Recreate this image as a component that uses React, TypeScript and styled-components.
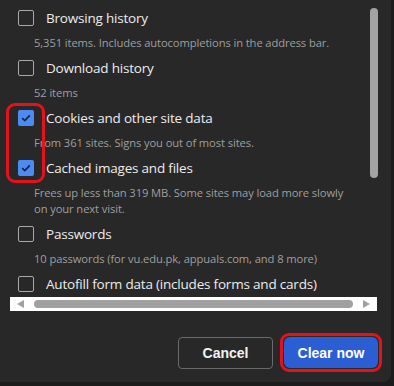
import React from "react";
import styled, { createGlobalStyle } from "styled-components";

const GlobalStyle = createGlobalStyle`
  html, body {
    margin: 0;
    padding: 0;
    background: #1c1c1c;
  }
  body {
    font-family: "Open Sans", "Noto Sans", sans-serif;
  }
`;

interface Item {
  label: string;
  desc: string;
  checked: boolean;
}

const items: Item[] = [
  {
    label: "Browsing history",
    desc: "5,351 items. Includes autocompletions in the address bar.",
    checked: false,
  },
  { label: "Download history", desc: "52 items", checked: false },
  {
    label: "Cookies and other site data",
    desc: "From 361 sites. Signs you out of most sites.",
    checked: true,
  },
  {
    label: "Cached images and files",
    desc: "Frees up less than 319 MB. Some sites may load more slowly on your next visit.",
    checked: true,
  },
  {
    label: "Passwords",
    desc: "10 passwords (for vu.edu.pk, appuals.com, and 8 more)",
    checked: false,
  },
  { label: "Autofill form data (includes forms and cards)", desc: "", checked: false },
];

const CheckMark = () => (
  <svg width="10" height="8" viewBox="0 0 10 8">
    <path
      d="M1.2 4.2 L3.8 6.6 L8.8 1.4"
      fill="none"
      stroke="#172340"
      strokeWidth="1.7"
    />
  </svg>
);

const App = () => {
  return (
    <>
      <GlobalStyle />
      <Dialog>
        <ListArea>
          <List>
            {items.map((item) => (
              <Row key={item.label}>
                <LabelLine>
                  <Box checked={item.checked}>
                    {item.checked && <CheckMark />}
                  </Box>
                  <Label>{item.label}</Label>
                </LabelLine>
                {item.desc && <Desc>{item.desc}</Desc>}
              </Row>
            ))}
            <CheckHighlight />
          </List>
          <VScroll />
        </ListArea>
        <HScroll>
          <Arrow dir="left" />
          <HThumb />
          <Arrow dir="right" />
        </HScroll>
        <Footer>
          <CancelButton>Cancel</CancelButton>
          <Ring>
            <ClearButton>Clear now</ClearButton>
          </Ring>
        </Footer>
      </Dialog>
    </>
  );
};

export default App;

const Dialog = styled.div`
  width: 391px;
  height: 382px;
  background: #282828;
  border-bottom-right-radius: 8px;
  display: flex;
  flex-direction: column;
  overflow: hidden;
`;

const ListArea = styled.div`
  display: flex;
  padding-top: 8px;
`;

const List = styled.div`
  position: relative;
  flex: 1;
  display: flex;
  flex-direction: column;
  gap: 7px;
`;

const Row = styled.div`
  display: flex;
  flex-direction: column;
  gap: 7px;
`;

const LabelLine = styled.div`
  display: flex;
  align-items: center;
  height: 20px;
  padding-left: 18px;
`;

const Box = styled.span<{ checked: boolean }>`
  box-sizing: border-box;
  width: 16px;
  height: 16px;
  border-radius: 2px;
  display: flex;
  align-items: center;
  justify-content: center;
  flex-shrink: 0;
  background: ${(p) => (p.checked ? "#4d8bf4" : "transparent")};
  border: ${(p) => (p.checked ? "none" : "1px solid #a9a9a9")};
`;

const Label = styled.span`
  margin-left: 12px;
  font-size: 13.5px;
  color: #ececec;
  white-space: nowrap;
  letter-spacing: -0.2px;
`;

const Desc = styled.p`
  margin: 0;
  padding-left: 34px;
  width: 318px;
  font-size: 11.2px;
  line-height: 16px;
  color: #9f9f9f;
  letter-spacing: -0.1px;
`;

const CheckHighlight = styled.div`
  position: absolute;
  left: 6px;
  top: 95px;
  width: 39px;
  height: 80px;
  box-sizing: border-box;
  border: 3px solid #e3121b;
  border-radius: 9px;
`;

const VScroll = styled.div`
  width: 8px;
  height: 170px;
  margin-right: 13px;
  border-radius: 4px;
  background: #a3a3a3;
`;

const HScroll = styled.div`
  margin: 3px 0 0 10px;
  width: 367px;
  height: 14px;
  background: #ffffff;
  display: flex;
  align-items: center;
  padding: 0 7px;
  box-sizing: border-box;
  gap: 8px;
`;

const Arrow = styled.span<{ dir: "left" | "right" }>`
  width: 0;
  height: 0;
  border-top: 4px solid transparent;
  border-bottom: 4px solid transparent;
  ${(p) =>
    p.dir === "left"
      ? "border-right: 7px solid #a0a0a0;"
      : "border-left: 7px solid #a0a0a0;"}
`;

const HThumb = styled.span`
  flex: 1;
  height: 8px;
  border-radius: 4px;
  background: #a0a0a0;
  margin: 0 2px;
`;

const Footer = styled.div`
  margin-top: auto;
  display: flex;
  justify-content: flex-end;
  align-items: center;
  gap: 7px;
  padding: 0 9px 10px 0;
`;

const CancelButton = styled.button`
  width: 95px;
  height: 32px;
  box-sizing: border-box;
  border: 1px solid #6a6a6a;
  border-radius: 4px;
  background: transparent;
  color: #f2f2f2;
  font-family: "Liberation Sans", Arial, sans-serif;
  font-weight: 700;
  font-size: 14px;
`;

const Ring = styled.div`
  border: 3px solid #e3121b;
  border-radius: 9px;
  padding: 1px;
  display: flex;
`;

const ClearButton = styled.button`
  width: 94px;
  height: 31px;
  border: none;
  border-radius: 6px;
  background: #2b5dd3;
  color: #ffffff;
  font-family: "Liberation Sans", Arial, sans-serif;
  font-weight: 700;
  font-size: 14px;
`;
